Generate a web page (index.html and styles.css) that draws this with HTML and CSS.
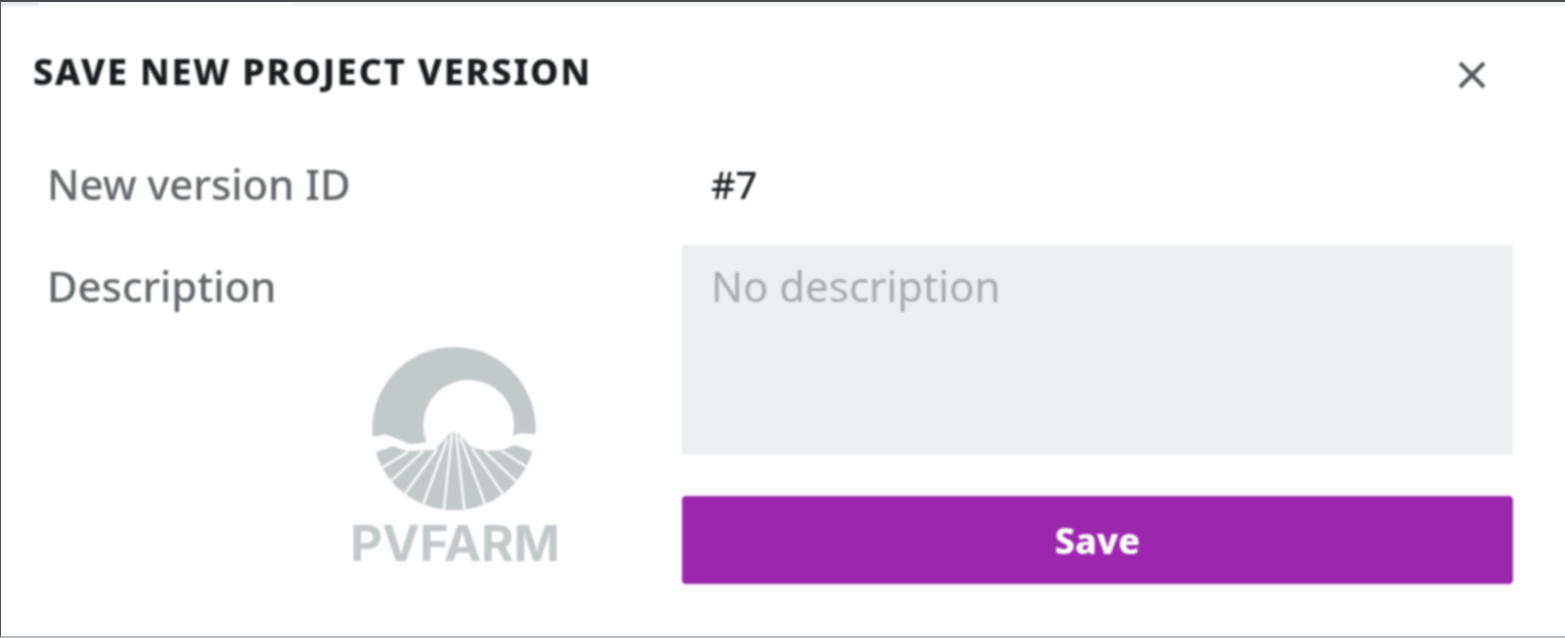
FILE: index.html
```html
<!DOCTYPE html>
<html lang="en">
<head>
  <meta charset="UTF-8" />
  <title>Save new project version</title>
  <link rel="stylesheet" href="styles.css">
</head>
<body>
  <div class="topstrip">
    <span class="tab tab-left"></span>
    <span class="tab tab-gap"></span>
    <span class="tab tab-right"></span>
  </div>
  <div class="dialog">
    <div class="dialog-head">
      <div class="dialog-title">SAVE NEW PROJECT VERSION</div>
      <svg class="close-icon" viewBox="0 0 30 30" aria-label="Close">
        <path d="M3 3L27 27M27 3L3 27" />
      </svg>
    </div>
    <div class="form-row row-id">
      <div class="form-label">New version ID</div>
      <div class="form-value">#7</div>
    </div>
    <div class="form-row row-desc">
      <div class="form-label">Description</div>
      <div class="desc-box">No description</div>
    </div>
    <div class="form-row row-save">
      <div></div>
      <button class="save-button">Save</button>
    </div>

    <!-- watermark on top of the form -->
    <div class="watermark">
      <svg class="watermark-logo" viewBox="0 0 690 540">
        <defs>
          <clipPath id="discClip"><circle cx="342" cy="281" r="245" /></clipPath>
        </defs>
        <path class="logo-fill" d="M98.2 305A245 245 0 1 1 586.4 298L540 295L518.4 302A136 136 0 1 0 260 322L212 328L135 298Z" />
        <g clip-path="url(#discClip)">
          <path class="logo-fill" d="M90 358L160 333L200 348L285 345L332 292L352 292L392 335L440 348L485 345L525 330L600 358V540H90Z" />
          <path class="logo-rays" d="M205 350L110 408M250 348L140 450M292 342L185 490M322 312L245 520M336 292L310 540M348 292L375 540M360 305L440 520M395 340L498 490M435 350L540 450M485 348L575 405" />
        </g>
      </svg>
      <div class="watermark-name">PVFARM</div>
    </div>
  </div>
</body>
</html>
```

FILE: styles.css
```css
* {
  box-sizing: border-box;
  margin: 0;
  padding: 0;
}

html, body {
  height: 100%;
  background: #fff;
  font-family: 'Noto Sans', sans-serif;
  overflow: hidden;
}

body {
  display: flex;
  flex-direction: column;
  border-top: 2px solid #4a4d50;
  border-left: 1px solid #55585b;
  border-bottom: 2px solid #b9bcbe;
}

.topstrip {
  display: flex;
  height: 4px;
  filter: blur(1px);
}

.tab-left {
  width: 38px;
  background: #e6e9ea;
}

.tab-gap {
  width: 252px;
  background: #fbfcfc;
}

.tab-right {
  flex: 1;
  background: #eef1f2;
}

.dialog {
  position: relative;
  flex: 1;
  filter: blur(1px);
}

.dialog-head {
  display: flex;
  justify-content: space-between;
  align-items: center;
  height: 124px;
  padding: 0 78px 0 32px;
}

.dialog-title {
  font-size: 36px;
  font-weight: 800;
  letter-spacing: 1.83px;
  color: #1a1d20;
  margin-top: 6px;
}

.close-icon {
  width: 30px;
  height: 30px;
  fill: none;
  stroke: #55595c;
  stroke-width: 4;
  margin-top: 14px;
}

.form-row {
  display: grid;
  grid-template-columns: 681px 831px;
}

.form-label {
  padding-left: 46px;
  font-size: 42px;
  font-weight: 500;
  letter-spacing: -0.1px;
  line-height: 52px;
  color: #63686b;
}

.form-value {
  padding-left: 29px;
  font-size: 38px;
  font-weight: 500;
  line-height: 52px;
  color: #1f2225;
}

.row-id {
  height: 115px;
  padding-top: 28px;
}

.row-desc {
  height: 210px;
}

.row-desc .form-label {
  padding-top: 15px;
}

.desc-box {
  padding: 15px 29px;
  font-size: 42px;
  line-height: 52px;
  color: #a6acae;
  background: #ebeff0;
}

.row-save {
  margin-top: 41px;
}

.save-button {
  height: 88px;
  border: none;
  border-radius: 4px;
  background: #9c27ae;
  color: #fff;
  font-family: 'Noto Sans', sans-serif;
  font-size: 36px;
  font-weight: 800;
}

.watermark {
  position: absolute;
  left: 339px;
  top: 329px;
  width: 230px;
  text-align: center;
}

.watermark-logo {
  display: block;
  width: 230px;
  height: 180px;
}

.logo-fill {
  fill: #c3c9cb;
}

.logo-rays {
  fill: none;
  stroke: #fff;
  stroke-width: 7;
}

.watermark-name {
  font-family: 'Inter', sans-serif;
  font-size: 50px;
  font-weight: 700;
  letter-spacing: -0.3px;
  line-height: 50px;
  color: #c3c9cb;
  margin-top: 3px;
}
```
